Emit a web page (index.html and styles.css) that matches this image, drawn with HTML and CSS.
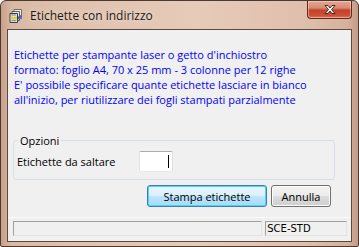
FILE: index.html
```html
<!DOCTYPE html>
<html lang="it">
<head>
    <title>Etichette con indirizzo</title>
    <link rel="stylesheet" href="styles.css">
</head>
<body>
 <div class="window">
    <div class="titlebar">
        <svg class="app-icon" width="14" height="15" viewBox="0 0 14 15">
            <!-- stacked label sheets -->
            <path d="M5 1.5h7.5v9H5z" fill="#f4f4f4" stroke="#6d6d6d"/>
            <path d="M3 3.5h7.5v9H3z" fill="#e9e9e9" stroke="#5c5c5c"/>
            <path d="M1 5.5h7.5v9H1z" fill="#dcdcdc" stroke="#3f3f3f"/>
            <path d="M1.5 9h6.5v2H1.5z" fill="#e8d21c"/>
            <path d="M2.5 7h4.5M2.5 12.5h4.5" stroke="#8a8a8a"/>
            <path d="M9 8.5l3.5-2v3l-3.5 2z" fill="#3d6fb8"/>
        </svg>
        <span class="title">Etichette con indirizzo</span>
        <div class="close">
            <svg width="16" height="11" viewBox="0 0 16 11">
                <path d="M3 1.5h3l2 2.5 2-2.5h3l-3.5 4 3.5 4h-3l-2-2.5-2 2.5h-3l3.5-4z" fill="#fff" stroke="#3b2a26" stroke-width="1" stroke-linejoin="round"/>
            </svg>
        </div>
    </div>
    <div class="client">
        <p class="info">Etichette per stampante laser o getto d'inchiostro<br>
        formato: foglio A4, 70 x 25 mm - 3 colonne per 12 righe<br>
        E' possibile specificare quante etichette lasciare in bianco<br>
        all'inizio, per riutilizzare dei fogli stampati parzialmente</p>

        <fieldset class="group">
            <legend>Opzioni</legend>
            <div class="field">
                <label for="skip">Etichette da saltare</label>
                <div class="textbox" id="skip"><span class="caret"></span></div>
            </div>
        </fieldset>

        <div class="actions">
            <button type="button" class="btn btn-default">Stampa etichette</button>
            <button type="button" class="btn">Annulla</button>
        </div>

        <div class="statusbar">
            <div class="panel panel-main"></div>
            <div class="panel panel-code">SCE-STD</div>
        </div>
    </div>
 </div>
</body>
</html>
```

FILE: styles.css
```css
html, body {
    margin: 0;
    padding: 0;
    background: #fff;
}
body {
    width: 359px;
    height: 247px;
    overflow: hidden;
    font-family: "Open Sans", "Noto Sans", sans-serif;
}

.window {
    box-sizing: border-box;
    width: 359px;
    height: 247px;
    border: 1px solid #4a3a33;
    border-radius: 6px 6px 2px 2px;
    padding: 0 6px 4px 6px;
    display: flex;
    flex-direction: column;
    background: linear-gradient(to right, #c9a08a 0%, #d9b9a4 3%, #e0c2ae 20%, #e6cbb9 55%, #dfbfab 85%, #d5b29c 97%, #c49b85 100%);
}

/* caption */
.titlebar {
    height: 28px;
    flex: none;
    display: flex;
    align-items: flex-start;
    padding-left: 2px;
}
.app-icon {
    margin-top: 7px;
    flex: none;
}
.title {
    margin-top: 6px;
    margin-left: 7px;
    font-family: "Open Sans", "Noto Sans", sans-serif;
    font-size: 12px;
    color: #1a1a1a;
    text-shadow: 0 0 6px rgba(255, 240, 230, 0.9);
}
.close {
    margin-left: auto;
    margin-right: 0;
    width: 45px;
    height: 18px;
    box-sizing: border-box;
    border: 1px solid #5a2b22;
    border-top: none;
    border-radius: 0 0 4px 4px;
    background: linear-gradient(to bottom, #e3a996 0%, #d98a73 40%, #c2432a 55%, #cd4f35 85%, #e0775c 100%);
    display: flex;
    align-items: center;
    justify-content: center;
    box-shadow: inset 0 0 0 1px rgba(255, 220, 200, 0.5);
}

/* dialog body */
.client {
    flex: 1;
    min-height: 0;
    border: 1px solid #5b4a43;
    background: #f0f0f0;
    display: flex;
    flex-direction: column;
    font-size: 11px;
    line-height: 15px;
    color: #000;
}
.client > * {
    flex-shrink: 0;
}
.info {
    margin: 17px 0 0 6px;
    color: #0000ff;
    font-size: 11px;
    line-height: 15px;
}

.group {
    margin: 26px 16px 0 5px;
    padding: 0 3px 4px 3px;
    border: 1px solid #d5dfe5;
    border-radius: 3px;
    height: 47px;
    box-sizing: border-box;
}
.group legend {
    padding: 0 2px;
    margin-left: 1px;
    color: #000;
}
.field {
    display: flex;
    align-items: center;
    margin-top: 3px;
}
.field label {
    width: 122px;
}
.textbox {
    box-sizing: border-box;
    width: 34px;
    height: 21px;
    background: #fff;
    border: 1px solid #abadb3;
    border-color: #abadb3 #dbdfe6 #e3e9ef #e2e3ea;
    border-radius: 2px;
    display: flex;
    justify-content: flex-end;
    align-items: center;
    padding-right: 3px;
}
.caret {
    width: 1px;
    height: 13px;
    background: #000;
}

.actions {
    display: flex;
    justify-content: flex-end;
    gap: 4px;
    margin: 5px 20px 0 0;
}
.btn {
    box-sizing: border-box;
    height: 22px;
    width: 60px;
    padding: 0;
    font-family: "Open Sans", "Noto Sans", sans-serif;
    font-size: 11px;
    color: #000;
    border: 1px solid #707070;
    border-radius: 3px;
    background: linear-gradient(to bottom, #f2f2f2 0%, #ebebeb 50%, #dddddd 51%, #cfcfcf 100%);
    box-shadow: inset 0 0 0 1px #fcfcfc;
}
.btn-default {
    width: 120px;
    border-color: #3c7fb1;
    background: linear-gradient(to bottom, #eaf6fd 0%, #d9f0fc 50%, #bee6fd 51%, #a7d9f5 100%);
    box-shadow: inset 0 0 0 1px #48d6fb;
}

.statusbar {
    margin-top: auto;
    height: 24px;
    box-sizing: border-box;
    border-top: 1px solid #fbfbfb;
    display: flex;
    align-items: flex-start;
    gap: 3px;
    padding: 3px 4px 0 5px;
}
.panel {
    box-sizing: border-box;
    height: 15px;
    border: 1px solid;
    border-color: #a0a0a0 #e3e3e3 #e3e3e3 #a0a0a0;
    font-family: "DejaVu Sans", sans-serif;
    font-size: 10px;
    line-height: 13px;
    padding-left: 1px;
}
.panel-main {
    width: 250px;
}
.panel-code {
    width: 82px;
}
```
